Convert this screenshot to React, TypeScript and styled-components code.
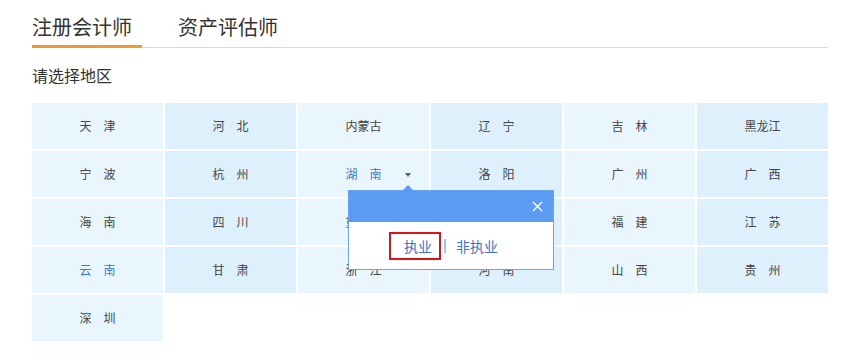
import React from "react";
import styled, { createGlobalStyle } from "styled-components";

const GlobalStyle = createGlobalStyle`
  html, body { margin: 0; padding: 0; background: #fff; }
  body { font-family: "Noto Sans CJK SC", "Noto Sans", sans-serif; color: #333; }
`;

const Page = styled.div`
  padding: 16px 0 0 32px;
  width: 796px;
`;

const TabBar = styled.div`
  display: flex;
  border-bottom: 1px solid #d6d9de;
`;

const Tab = styled.div<{ $active?: boolean }>`
  font-size: 20px;
  line-height: 22px;
  color: #333;
  padding: 0 ${(p) => (p.$active ? "10px" : "0")} 7px 0;
  margin-right: 36px;
  border-bottom: 3px solid ${(p) => (p.$active ? "#f09a2e" : "transparent")};
  margin-bottom: -1px;
`;

const Heading = styled.div`
  font-size: 16px;
  line-height: 20px;
  color: #333;
  margin: 17px 0 18px;
`;

const Grid = styled.div`
  display: grid;
  grid-template-columns: repeat(6, 131px);
  grid-auto-rows: 46px;
  gap: 2px;
`;

const Cell = styled.div<{ $dark?: boolean; $blue?: boolean }>`
  position: relative;
  display: flex;
  align-items: center;
  justify-content: center;
  background: ${(p) => (p.$dark ? "#dff0fd" : "#eaf6fe")};
  font-size: 12px;
  line-height: 16px;
  color: ${(p) => (p.$blue ? "#3f78c8" : "#444")};
`;

const Caret = styled.span`
  position: absolute;
  right: 18px;
  top: 22px;
  width: 0;
  height: 0;
  border-left: 3.5px solid transparent;
  border-right: 3.5px solid transparent;
  border-top: 4px solid #5a6270;
`;

const Popup = styled.div`
  position: absolute;
  left: 50px;
  top: 39px;
  width: 204px;
  border: 1px solid #6aa4f0;
  background: #fff;
  z-index: 10;
`;

const PopupArrow = styled.span`
  position: absolute;
  left: 53px;
  top: -6px;
  width: 0;
  height: 0;
  border-left: 6px solid transparent;
  border-right: 6px solid transparent;
  border-bottom: 6px solid #5b9cf2;
`;

const PopupHeader = styled.div`
  height: 31px;
  background: #5b9cf2;
  display: flex;
  align-items: center;
  justify-content: flex-end;
  padding-right: 10px;
`;

const PopupBody = styled.div`
  height: 47px;
  display: flex;
  align-items: center;
  padding-left: 40px;
`;

const Option = styled.span<{ $marked?: boolean }>`
  font-size: 14px;
  line-height: 24px;
  color: #3f72c6;
  border: 2px solid ${(p) => (p.$marked ? "#d9141b" : "transparent")};
  padding: ${(p) => (p.$marked ? "0 7px 0 13px" : "0")};
`;

const Divider = styled.span`
  width: 2px;
  height: 14px;
  background: #a3c3ee;
  margin: 0 8px 0 3px;
`;

const CloseIcon = () => (
  <svg width="11" height="11" viewBox="0 0 11 11">
    <path d="M1 1L10 10M10 1L1 10" stroke="#fff" strokeWidth="1.4" fill="none" />
  </svg>
);

const S = "\u3000";

const regions: { name: string; blue?: boolean; popup?: boolean }[] = [
  { name: `天${S}津` },
  { name: `河${S}北` },
  { name: "内蒙古" },
  { name: `辽${S}宁` },
  { name: `吉${S}林` },
  { name: "黑龙江" },
  { name: `宁${S}波` },
  { name: `杭${S}州` },
  { name: `湖${S}南`, blue: true, popup: true },
  { name: `洛${S}阳` },
  { name: `广${S}州` },
  { name: `广${S}西` },
  { name: `海${S}南` },
  { name: `四${S}川` },
  { name: `重${S}庆` },
  { name: `上${S}海` },
  { name: `福${S}建` },
  { name: `江${S}苏` },
  { name: `云${S}南`, blue: true },
  { name: `甘${S}肃` },
  { name: `浙${S}江` },
  { name: `河${S}南` },
  { name: `山${S}西` },
  { name: `贵${S}州` },
  { name: `深${S}圳` },
];

export default function App() {
  return (
    <>
      <GlobalStyle />
      <Page>
        <TabBar>
          <Tab $active>注册会计师</Tab>
          <Tab>资产评估师</Tab>
        </TabBar>
        <Heading>请选择地区</Heading>
        <Grid>
          {regions.map((r, i) => (
            <Cell key={i} $dark={i % 2 === 1} $blue={r.blue}>
              {r.name}
              {r.popup && (
                <>
                  <Caret />
                  <Popup>
                    <PopupArrow />
                    <PopupHeader>
                      <CloseIcon />
                    </PopupHeader>
                    <PopupBody>
                      <Option $marked>执业</Option>
                      <Divider />
                      <Option>非执业</Option>
                    </PopupBody>
                  </Popup>
                </>
              )}
            </Cell>
          ))}
        </Grid>
      </Page>
    </>
  );
}
